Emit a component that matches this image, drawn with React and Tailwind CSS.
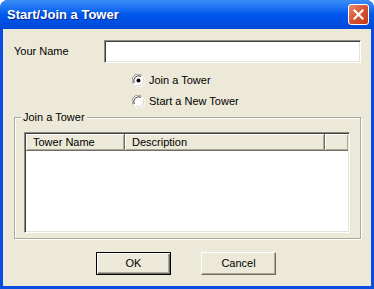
import React from 'react';

const Radio = ({ checked, label }) => (
  <label className="flex items-center h-[21px] pl-[129px] gap-[4px]">
    <svg width="13" height="13" viewBox="0 0 13 13">
      <circle cx="6.5" cy="6.5" r="6" fill="#fff" />
      <path d="M1.2 9.5 A6 6 0 0 1 9.5 1.2" stroke="#8e8f8f" strokeWidth="1" fill="none" />
      <path d="M2.3 9 A5 5 0 0 1 9 2.3" stroke="#404040" strokeWidth="1" fill="none" />
      <path d="M3.5 11.8 A6 6 0 0 0 11.8 3.5" stroke="#ffffff" strokeWidth="1" fill="none" />
      <path d="M3.8 10.8 A5 5 0 0 0 10.8 3.8" stroke="#d4d0c8" strokeWidth="1" fill="none" />
      {checked && <circle cx="6.5" cy="6.5" r="2" fill="#000" />}
    </svg>
    <span>{label}</span>
  </label>
);

const HeaderCell = ({ children, className }) => (
  <div
    className={`h-full flex items-center pl-[7px] bg-[#ece9d8] border-r border-b border-r-[#716f64] border-b-[#716f64] shadow-[inset_1px_1px_0_#fff,inset_-1px_-1px_0_#aca899] ${className}`}
  >
    {children}
  </div>
);

const App = () => {
  return (
    <div className="w-[374px] h-[289px] flex flex-col rounded-t-[8px] overflow-hidden bg-[#0a4ee0] text-[11px] text-black [font-family:'Liberation_Sans',Arial,sans-serif]">
      <div className="h-[29px] flex items-center justify-between pl-[7px] pr-[5px] bg-gradient-to-b from-[#3b8ef7] via-[#0058ee] to-[#0048d8]">
        <span className="text-white font-bold text-[13px] [text-shadow:1px_1px_0_#0a2a8a]">Start/Join a Tower</span>
        <div className="w-[21px] h-[21px] rounded-[3px] border border-white bg-gradient-to-br from-[#e88a6d] via-[#d9532e] to-[#c23a16] flex items-center justify-center">
          <svg width="11" height="11" viewBox="0 0 11 11">
            <path d="M1.5 1.5 L9.5 9.5 M9.5 1.5 L1.5 9.5" stroke="#fff" strokeWidth="2.2" strokeLinecap="square" />
          </svg>
        </div>
      </div>
      <div className="flex-1 mx-[3px] mb-[3px] bg-[#ece9d8] flex flex-col">
        <div className="mt-[11px] flex items-center">
          <span className="ml-[11px] w-[90px]">Your Name</span>
          <div className="w-[257px] h-[23px] bg-white border border-t-[#8e8c80] border-l-[#8e8c80] border-b-white border-r-white shadow-[inset_1px_1px_0_#404040,inset_-1px_-1px_0_#e6e3d6]" />
        </div>
        <div className="mt-[7px] flex flex-col">
          <Radio checked label="Join a Tower" />
          <Radio label="Start a New Tower" />
        </div>
        <div className="relative ml-[11px] mt-[5px] w-[347px] h-[122px] border border-[#aca899] shadow-[inset_1px_1px_0_#fff,1px_1px_0_#fff]">
          <span className="absolute left-[6px] top-[-7px] px-[2px] bg-[#ece9d8] leading-[13px]">Join a Tower</span>
          <div className="ml-[9px] mt-[14px] w-[326px] h-[101px] flex flex-col bg-white border border-t-[#8e8c80] border-l-[#8e8c80] border-b-white border-r-white shadow-[inset_1px_1px_0_#404040,inset_-1px_-1px_0_#e6e3d6] p-[1px]">
            <div className="h-[17px] flex">
              <HeaderCell className="w-[99px]">Tower Name</HeaderCell>
              <HeaderCell className="w-[200px]">Description</HeaderCell>
              <HeaderCell className="flex-1 border-r-0" />
            </div>
            <div className="flex-1 bg-white" />
          </div>
        </div>
        <div className="mt-[13px] ml-[93px] flex gap-[30px]">
          <button className="w-[75px] h-[23px] bg-[#ece9d8] border border-black shadow-[inset_1px_1px_0_#fff,inset_-1px_-1px_0_#716f64,inset_-2px_-2px_0_#aca899]">
            OK
          </button>
          <button className="w-[75px] h-[23px] bg-[#ece9d8] border border-t-white border-l-white border-b-[#716f64] border-r-[#716f64] shadow-[inset_-1px_-1px_0_#aca899]">
            Cancel
          </button>
        </div>
      </div>
    </div>
  );
};

export default App;
